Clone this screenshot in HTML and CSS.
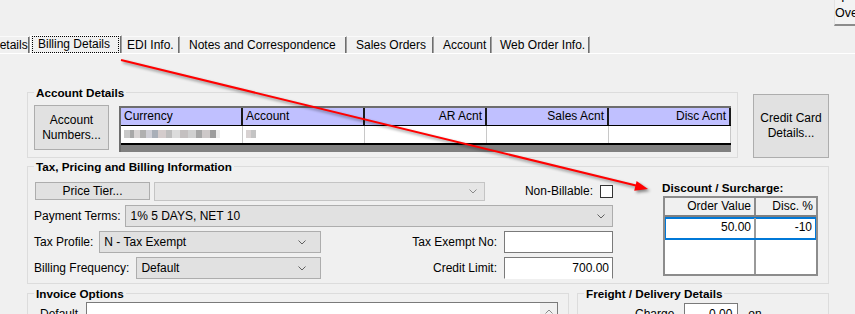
FILE: index.html
```html
<!DOCTYPE html>
<html lang="en">
<head>
    <meta charset="UTF-8">
    <title>Customer - Billing Details</title>
    <link rel="stylesheet" href="styles.css">
</head>
<body>
<div class="window">
    <div class="topbar">
        <div class="over-btn"><span class="over-l1">T</span><span>Over</span></div>
    </div>

    <!-- Tab strip -->
    <div class="tabs">
        <div class="tab tab-cut">Details</div>
        <div class="tab tab-active"><span class="focus">Billing Details</span></div>
        <div class="tab tab-edi">EDI Info.</div>
        <div class="tab tab-notes">Notes and Correspondence</div>
        <div class="tab tab-sales">Sales Orders</div>
        <div class="tab tab-account">Account</div>
        <div class="tab tab-web">Web Order Info.</div>
    </div>

    <div class="panel">
        <!-- Account details -->
        <div class="row-account">
            <fieldset class="group group-account">
                <legend>Account Details</legend>
                <div class="account-body">
                    <button class="btn btn-acct">Account<br>Numbers...</button>
                    <div class="acct-grid">
                        <div class="acct-head">
                            <div class="ac-cell">Currency</div>
                            <div class="ac-cell">Account</div>
                            <div class="ac-cell num">AR Acnt</div>
                            <div class="ac-cell num">Sales Acnt</div>
                            <div class="ac-cell num">Disc Acnt</div>
                        </div>
                        <div class="acct-row">
                            <div class="ac-cell"><span class="blur blur-long"></span></div>
                            <div class="ac-cell"><span class="blur blur-short"></span></div>
                            <div class="ac-cell"></div>
                            <div class="ac-cell"></div>
                            <div class="ac-cell"></div>
                        </div>
                        <div class="acct-scroll"></div>
                    </div>
                </div>
            </fieldset>
            <button class="btn btn-cc">Credit Card<br>Details...</button>
        </div>

        <!-- Tax, pricing, billing -->
        <fieldset class="group group-tax">
            <legend>Tax, Pricing and Billing Information</legend>
            <div class="tax-body">
                <div class="tax-form">
                    <div class="form-row row-tier">
                        <button class="btn btn-tier">Price Tier...</button>
                        <div class="combo combo-disabled combo-tier"><span></span><svg class="chev" viewBox="0 0 8 5"><polyline points="0.5,0.5 4,4 7.5,0.5"/></svg></div>
                        <span class="spacer"></span>
                        <label class="lbl">Non-Billable:</label>
                        <span class="check"></span>
                    </div>
                    <div class="form-row">
                        <label class="lbl">Payment Terms:</label>
                        <div class="combo combo-terms"><span>1% 5 DAYS, NET 10</span><svg class="chev" viewBox="0 0 8 5"><polyline points="0.5,0.5 4,4 7.5,0.5"/></svg></div>
                    </div>
                    <div class="form-row">
                        <div class="left-part">
                            <label class="lbl">Tax Profile:</label>
                            <div class="combo combo-half combo-profile"><span>N - Tax Exempt</span><svg class="chev" viewBox="0 0 8 5"><polyline points="0.5,0.5 4,4 7.5,0.5"/></svg></div>
                        </div>
                        <span class="spacer"></span>
                        <label class="lbl">Tax Exempt No:</label>
                        <div class="field"></div>
                    </div>
                    <div class="form-row">
                        <div class="left-part">
                            <label class="lbl">Billing Frequency:</label>
                            <div class="combo combo-half combo-freq"><span>Default</span><svg class="chev" viewBox="0 0 8 5"><polyline points="0.5,0.5 4,4 7.5,0.5"/></svg></div>
                        </div>
                        <span class="spacer"></span>
                        <label class="lbl">Credit Limit:</label>
                        <div class="field field-open num">700.00</div>
                    </div>
                </div>

                <div class="discount">
                    <div class="disc-title">Discount / Surcharge:</div>
                    <div class="disc-grid">
                        <div class="disc-head">
                            <div class="dc-cell dc-value">Order Value</div>
                            <div class="dc-cell dc-pct">Disc. %</div>
                        </div>
                        <div class="disc-row selected">
                            <div class="dc-cell dc-value">50.00</div>
                            <div class="dc-cell dc-pct">-10</div>
                        </div>
                        <div class="disc-row empty">
                            <div class="dc-cell dc-value"></div>
                            <div class="dc-cell dc-pct"></div>
                        </div>
                    </div>
                </div>
            </div>
        </fieldset>

        <!-- Invoice options and freight -->
        <div class="row-bottom">
            <fieldset class="group group-invoice">
                <legend>Invoice Options</legend>
                <div class="invoice-body">
                    <label class="lbl lbl-default">Default</label>
                    <div class="memo">
                        <span class="memo-scroll"><svg class="chev" viewBox="0 0 8 5"><polyline points="0.5,4.5 4,1 7.5,4.5"/></svg></span>
                    </div>
                </div>
            </fieldset>
            <fieldset class="group group-freight">
                <legend>Freight / Delivery Details</legend>
                <div class="freight-body">
                    <label class="lbl lbl-charge">Charge</label>
                    <div class="field field-charge num">0.00</div>
                    <span class="lbl lbl-on">on</span>
                </div>
            </fieldset>
        </div>
    </div>

    <!-- annotation arrow over the screenshot -->
    <svg class="arrow" viewBox="0 0 855 314">
        <line x1="121" y1="60" x2="637" y2="185.8"/>
        <polygon points="648,189 636.6,181 634.2,190.8"/>
    </svg>
</div>
</body>
</html>
```

FILE: styles.css
```css
/* General styling */
body {
    margin: 0;
    background-color: #f0f0f0;
    font-family: 'Liberation Sans', Arial, sans-serif;
    font-size: 12px;
    color: #000;
}

.window {
    position: relative;
    width: 855px;
    height: 314px;
    overflow: hidden;
}

/* Top right button, cut off by the window */
.topbar {
    height: 36px;
    display: flex;
}

.over-btn {
    margin-left: 834px;
    margin-top: -9px;
    width: 40px;
    height: 35px;
    border-left: 1px solid #e3e3e3;
    border-bottom: 2px solid #8c8c8c;
    background-color: #f3f3f3;
    display: flex;
    flex-direction: column;
    font-size: 12.5px;
    line-height: 15px;
    padding-top: 0;
    box-sizing: border-box;
}

.over-l1 {
    padding-left: 4px;
}

/* Tabs */
.tabs {
    display: flex;
    height: 17px;
    border-bottom: 1px solid #fff;
}

.tab {
    padding: 1px 0 0 9px;
    line-height: 14px;
    border-top: 1px solid #fafafa;
    border-right: 1px solid #a0a0a0;
    box-shadow: inset -1px 0 0 #6e6e6e;
    white-space: nowrap;
    box-sizing: border-box;
    flex: none;
}

.tab-cut {
    margin-left: -10px;
    padding-left: 1px;
    width: 40px;
}

.tab-active {
    margin-top: -1px;
    padding: 0 2px 0 1px;
    width: 92px;
    border-left: 1px solid #fff;
}

.tab-edi {
    padding-left: 5px;
    width: 58px;
}

.tab-notes {
    width: 167px;
}

.tab-sales {
    width: 87px;
}

.tab-account {
    width: 58px;
}

.tab-web {
    padding-left: 8px;
    width: 98px;
}

.focus {
    display: block;
    padding: 1px 0 0 6px;
    height: 17px;
    box-sizing: border-box;
    outline: 1px dotted #000;
    outline-offset: -1px;
}

/* Group boxes */
.group {
    margin: 0;
    padding: 0 6px 6px 6px;
    border: 1px solid #dcdcdc;
    min-width: 0;
}

.group legend {
    padding: 0 2px;
    font-size: 11.7px;
    font-weight: bold;
    line-height: 13px;
}

.btn {
    font-family: inherit;
    font-size: 12px;
    line-height: 15px;
    color: #000;
    background-color: #e1e1e1;
    border: 1px solid #adadad;
    padding: 0;
    margin: 0;
}

.num {
    text-align: right;
}

/* Account details */
.row-account {
    display: flex;
    align-items: flex-start;
    margin-top: 32px;
    margin-left: 27px;
}

.group-account {
    width: 711px;
    box-sizing: border-box;
    padding: 6px 6px 5px 6px;
}

.account-body {
    display: flex;
    align-items: flex-start;
    gap: 10px;
}

.btn-acct {
    width: 75px;
    height: 45px;
}

.btn-cc {
    margin-left: 15px;
    margin-top: 8px;
    width: 76px;
    height: 64px;
}

.acct-grid {
    margin-top: 1px;
    width: 612px;
    border-top: 2px solid #6e6e6e;
    border-left: 2px solid #6e6e6e;
    box-sizing: border-box;
}

.acct-head,
.acct-row {
    display: flex;
}

.acct-head {
    height: 17px;
    border-bottom: 1px solid #000;
}

.acct-head .ac-cell {
    background-color: #c0c0ff;
    border-right: 2px solid #1a1a1a;
    line-height: 16px;
}

.ac-cell {
    width: 122px;
    padding: 0 3px 0 3px;
    box-sizing: border-box;
    flex: none;
}

.acct-row {
    height: 17px;
    background-color: #fff;
    border-bottom: 2px solid #000;
}

.acct-row .ac-cell {
    border-right: 1px solid #c8c8c8;
    padding-top: 4px;
}

.acct-scroll {
    height: 7px;
    background-color: #808080;
}

.blur {
    display: block;
    height: 8px;
}

.blur-long {
    width: 96px;
    background: linear-gradient(90deg, #c9c9c9 0 6px, #a8a8a8 6px 10px, #d8d4d4 10px 16px, #b0b0b0 16px 22px, #cfcfd6 22px 28px, #a9afb8 28px 34px, #d4cccc 34px 42px, #bdbdbd 42px 48px, #dcdcdc 48px 56px, #c4c0c0 56px 64px, #d0d0d0 64px 72px, #a6a6a6 72px 78px, #cdc8c8 78px 86px, #9c9c9c 86px 92px, #ededed 92px 96px);
}

.blur-short {
    width: 10px;
    background: linear-gradient(90deg, #d8d2d2 0 5px, #c4c4c4 5px 10px);
}

/* Tax, pricing and billing */
.group-tax {
    margin-top: 2px;
    margin-left: 27px;
    width: 802px;
    box-sizing: border-box;
    padding: 8px 10px 4px 6px;
}

.tax-body {
    display: flex;
    align-items: flex-start;
}

.tax-form {
    width: 579px;
    display: flex;
    flex-direction: column;
    gap: 4px;
}

.form-row {
    display: flex;
    align-items: center;
    height: 22px;
}

.row-tier {
    height: 20px;
}

.left-part {
    width: 287px;
    display: flex;
    align-items: center;
}

.spacer {
    flex: 1;
}

.lbl {
    white-space: nowrap;
    line-height: 14px;
}

.btn-tier {
    margin-left: 1px;
    width: 115px;
    height: 18px;
    line-height: 16px;
}

.combo {
    height: 22px;
    display: flex;
    align-items: center;
    justify-content: space-between;
    padding: 0 7px 0 4px;
    box-sizing: border-box;
    background-color: #e1e1e1;
    border: 1px solid #adadad;
}

.chev {
    width: 8px;
    height: 5px;
    fill: none;
    stroke: #606060;
    stroke-width: 1;
}

.combo-disabled {
    background-color: #e6e6e6;
    border-color: #c4c4c4;
}

.combo-disabled .chev {
    stroke: #8a8a8a;
}

.combo-tier {
    margin-left: 4px;
    width: 331px;
    height: 19px;
}

.combo-terms {
    margin-left: 5px;
    flex: 1;
}

.combo-half {
    flex: 1;
    padding-right: 14px;
}

.combo-profile {
    margin-left: 6px;
}

.combo-freq {
    margin-left: 7px;
}

.check {
    margin-left: 7px;
    width: 13px;
    height: 13px;
    box-sizing: border-box;
    border: 1px solid #333;
    background-color: #fff;
}

.field {
    margin-left: 7px;
    width: 109px;
    height: 22px;
    box-sizing: border-box;
    border: 1px solid #7a7a7a;
    background-color: #fff;
    padding: 3px 3px 0 3px;
    line-height: 14px;
}

.field-open {
    border-bottom-color: #fff;
}

/* Discount / surcharge table */
.discount {
    margin-left: auto;
    width: 156px;
}

.disc-title {
    font-size: 11.7px;
    font-weight: bold;
    line-height: 13px;
    margin-bottom: 2px;
}

.disc-grid {
    margin-left: 1px;
    height: 80px;
    box-sizing: border-box;
    border: 2px solid #8c8c8c;
    background-color: #fff;
    display: flex;
    flex-direction: column;
}

.disc-head,
.disc-row {
    display: flex;
}

.disc-head {
    height: 17px;
    background-color: #f0f0f0;
    border-bottom: 2px solid #808080;
    line-height: 16px;
}

.dc-cell {
    padding-right: 3px;
    box-sizing: border-box;
    text-align: right;
}

.dc-value {
    width: 91px;
    border-right: 2px solid #8c8c8c;
}

.dc-pct {
    flex: 1;
}

.disc-row.selected {
    height: 20px;
    line-height: 18px;
    border: 1px solid #0078d7;
    border-bottom-width: 2px;
    box-shadow: inset 0 1px 0 #0078d7;
}

.disc-row.selected .dc-value {
    width: 90px;
    border-right-color: #9a9a9a;
}

.disc-row.empty {
    flex: 1;
}

.disc-row.empty .dc-value {
    border-right-color: #9a9a9a;
}

/* Invoice options and freight */
.row-bottom {
    display: flex;
    align-items: flex-start;
    margin-top: 3px;
    margin-left: 27px;
}

.group-invoice {
    width: 542px;
    box-sizing: border-box;
    padding: 1px 10px 6px 6px;
}

.invoice-body {
    display: flex;
    align-items: flex-start;
}

.lbl-default {
    margin-left: 6px;
    margin-top: 6px;
}

.memo {
    margin-left: 8px;
    margin-top: 1px;
    flex: 1;
    height: 40px;
    border: 1px solid #7a7a7a;
    background-color: #fff;
    display: flex;
    justify-content: flex-end;
}

.memo-scroll {
    width: 17px;
    height: 17px;
    background-color: #f0f0f0;
    display: flex;
    align-items: center;
    justify-content: center;
}

.memo-scroll .chev {
    stroke: #8a8a8a;
}

.group-freight {
    margin-left: 8px;
    width: 252px;
    box-sizing: border-box;
    padding: 3px 6px 6px 6px;
}

.freight-body {
    display: flex;
    align-items: flex-start;
}

.lbl-charge {
    margin-left: 51px;
    margin-top: 4px;
}

.field-charge {
    margin-left: 10px;
    width: 54px;
    padding-right: 5px;
}

.lbl-on {
    margin-left: 10px;
    margin-top: 4px;
}

/* Annotation arrow */
.arrow {
    position: absolute;
    top: 0;
    left: 0;
    width: 855px;
    height: 314px;
    pointer-events: none;
    filter: drop-shadow(2px 2px 1.5px rgba(0, 0, 0, 0.45));
}

.arrow line {
    stroke: #ff0000;
    stroke-width: 2;
}

.arrow polygon {
    fill: #ff0000;
}
```
